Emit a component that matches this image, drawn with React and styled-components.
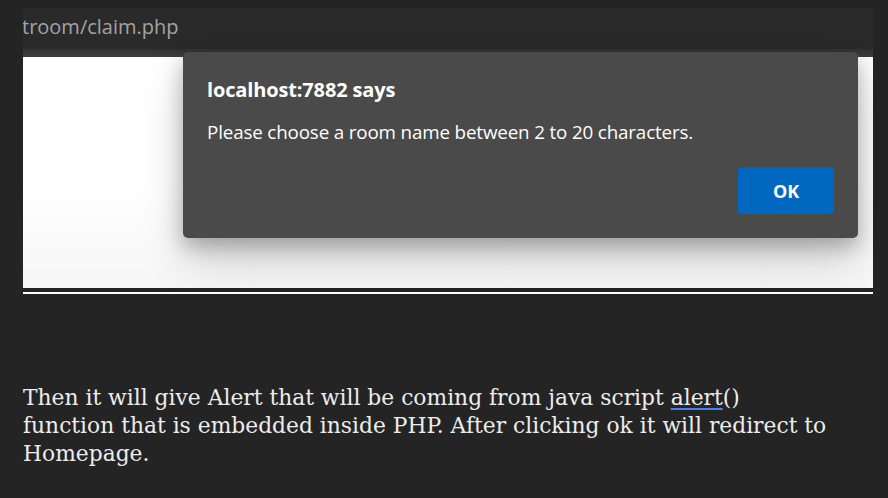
import React from 'react';
import styled, { createGlobalStyle } from 'styled-components';

const GlobalStyle = createGlobalStyle`
  html, body {
    margin: 0;
    padding: 0;
    background: #242424;
  }
  body {
    width: 888px;
    height: 498px;
    overflow: hidden;
  }
`;

const Page = styled.div`
  padding: 8px 15px 0 23px;
`;

const Shot = styled.div`
  position: relative;
  width: 850px;
`;

const AddressBar = styled.div`
  height: 41px;
  background: #2a2a2a;
  display: flex;
  align-items: center;
  overflow: hidden;
`;

const Url = styled.span`
  font-family: 'Open Sans', 'Noto Sans', sans-serif;
  font-size: 20px;
  color: #a3a3a3;
  margin-left: -1px;
  margin-top: -4px;
`;

const Strip = styled.div`
  height: 8px;
  background: linear-gradient(#333333, #3e3e3e);
`;

const Viewport = styled.div`
  height: 231px;
  background: linear-gradient(#ffffff 55%, #f6f6f6);
`;

const Rule = styled.div`
  margin-top: 4px;
  height: 2px;
  background: #ffffff;
`;

const Dialog = styled.div`
  position: absolute;
  left: 160px;
  top: 44px;
  width: 675px;
  height: 186px;
  box-sizing: border-box;
  background: #4a4a4a;
  border-radius: 5px;
  padding: 26px 24px 0 24px;
  box-shadow: 0 8px 20px rgba(0, 0, 0, 0.25), 0 22px 44px rgba(0, 0, 0, 0.18);
  font-family: 'Open Sans', 'Noto Sans', sans-serif;
  color: #ffffff;
  display: flex;
  flex-direction: column;
`;

const Title = styled.div`
  font-size: 20px;
  font-weight: 700;
  letter-spacing: -0.15px;
  line-height: 24px;
`;

const Message = styled.div`
  margin-top: 18px;
  font-size: 18.8px;
  letter-spacing: -0.15px;
  line-height: 24px;
`;

const Actions = styled.div`
  display: flex;
  justify-content: flex-end;
  margin-top: 23px;
`;

const OkButton = styled.button`
  width: 96px;
  height: 47px;
  border: none;
  border-radius: 3px;
  background: #0067c0;
  color: #ffffff;
  font-family: 'Open Sans', 'Noto Sans', sans-serif;
  font-size: 18px;
  font-weight: 700;
  letter-spacing: -0.2px;
  cursor: pointer;
`;

const Caption = styled.p`
  margin: 90px 0 0 0;
  width: 850px;
  font-family: 'DejaVu Serif', Georgia, serif;
  font-size: 21.8px;
  line-height: 28px;
  color: #ececec;
`;

const Code = styled.span`
  text-decoration: underline;
  text-decoration-color: #4a80e8;
  text-decoration-thickness: 2px;
  text-underline-offset: 3px;
`;

export default function App() {
  return (
    <>
      <GlobalStyle />
      <Page>
        <Shot>
          <AddressBar>
            <Url>troom/claim.php</Url>
          </AddressBar>
          <Strip />
          <Viewport />
          <Rule />
          <Dialog>
            <Title>localhost:7882 says</Title>
            <Message>Please choose a room name between 2 to 20 characters.</Message>
            <Actions>
              <OkButton>OK</OkButton>
            </Actions>
          </Dialog>
        </Shot>
        <Caption>
          Then it will give Alert that will be coming from java script <Code>alert</Code>()
          <br />
          function that is embedded inside PHP. After clicking ok it will redirect to
          <br />
          Homepage.
        </Caption>
      </Page>
    </>
  );
}
